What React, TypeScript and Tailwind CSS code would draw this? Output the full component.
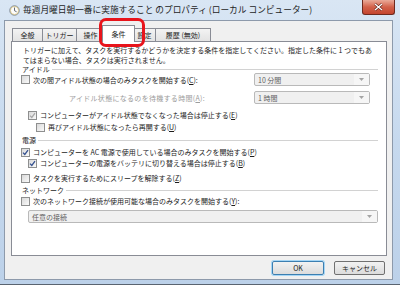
import React from "react";

const jp = "font-['Noto_Sans_CJK_JP','Noto_Sans',sans-serif]";

function Box({ checked, disabled }: { checked?: boolean; disabled?: boolean }) {
  return (
    <div className="w-[9px] h-[9px] shrink-0 border border-[#8e8f8f] bg-gradient-to-br from-[#d9d9d9] to-[#fafafa] flex items-center justify-center">
      {checked && (
        <svg width="7" height="7" viewBox="0 0 7 7">
          <path
            d="M1 3.6 L2.8 5.4 L6 1.2"
            fill="none"
            stroke={disabled ? "#a8a8a8" : "#34508f"}
            strokeWidth="1.3"
          />
        </svg>
      )}
    </div>
  );
}

function Select({ text, className }: { text: string; className: string }) {
  return (
    <div className={`h-[13px] border border-[#b9b9b9] rounded-[2px] bg-[#f0f0f0] flex items-center text-[#5f5f5f] ${className}`}>
      <span className="flex-1 pl-[3px]">{text}</span>
      <div className="w-[15px] h-full bg-[#f6f6f6] flex items-center justify-center">
        <svg width="5" height="3" viewBox="0 0 5 3">
          <path d="M0 0 L5 0 L2.5 3 Z" fill="#a4a4a4" />
        </svg>
      </div>
    </div>
  );
}

function Header({ label, className }: { label: string; className?: string }) {
  return (
    <div className={`flex items-center ml-[1px] ${className}`}>
      <span>{label}</span>
      <div className="flex-1 h-px bg-[#d2d2d2] ml-[2px]" />
    </div>
  );
}

function Row({
  indent,
  checked,
  disabled,
  children,
  className,
}: {
  indent: string;
  checked?: boolean;
  disabled?: boolean;
  children: React.ReactNode;
  className?: string;
}) {
  return (
    <div className={`flex items-center h-[10px] ${indent} ${className}`}>
      <Box checked={checked} disabled={disabled} />
      <span className="ml-[3px] whitespace-nowrap">{children}</span>
    </div>
  );
}

const tabs = [
  { label: "全般", w: "w-[31px]" },
  { label: "トリガー", w: "w-[35px]" },
  { label: "操作", w: "w-[29px]" },
  { label: "条件", w: "w-[33px]", active: true },
  { label: "設定", w: "w-[23px]" },
  { label: "履歴 (無効)", w: "w-[56px]" },
];

export default function App() {
  return (
    <div className={`relative w-[400px] h-[285px] flex flex-col bg-gradient-to-b from-[#d9e6f4] via-[#c6d9ee] to-[#bcd1e9] border-b border-[#5a6470] overflow-hidden ${jp} text-[7px] leading-[10px] text-[#1c1c1c]`}>
      {/* title bar */}
      <div className="h-[20px] shrink-0 flex items-center pl-[9px]">
        <svg width="11" height="11" viewBox="0 0 11 11">
          <circle cx="5.5" cy="5.5" r="4.7" fill="#fdfdfd" stroke="#6e7a86" strokeWidth="0.9" />
          <path d="M5.5 2.5 L5.5 5.7 L7.6 6.8" fill="none" stroke="#505a64" strokeWidth="0.9" />
          <circle cx="5.5" cy="5.5" r="4" fill="none" stroke="#d9b44a" strokeWidth="0.5" />
        </svg>
        <span className="ml-[3px] text-[8.7px] text-[#1e1e1e] whitespace-nowrap">
          毎週月曜日朝一番に実施すること のプロパティ (ローカル コンピューター)
        </span>
      </div>
      <div className="absolute right-[5px] top-0 w-[33px] h-[15px] rounded-b-[3px] border border-t-0 border-[#6e2a1f] bg-gradient-to-b from-[#e9aa99] via-[#d2614a] to-[#c4452f] flex items-center justify-center">
        <svg width="9" height="8" viewBox="0 0 9 8">
          <path d="M1 1 L8 7 M8 1 L1 7" stroke="#5a1d14" strokeWidth="2.4" />
          <path d="M1 1 L8 7 M8 1 L1 7" stroke="#ffffff" strokeWidth="1.4" />
        </svg>
      </div>

      {/* dialog body */}
      <div className="flex-1 ml-[4px] mr-[7px] mb-[4px] bg-[#f0f0f0] border border-[#8d9aab] flex flex-col pl-[6px] pr-[4px] pt-[4px]">
        <div className="flex items-end h-[16px] ml-[1px]">
          {tabs.map((t) =>
            t.active ? (
              <div
                key={t.label}
                className={`relative z-10 ${t.w} h-[17px] -mb-px -mx-[2px] bg-white border border-b-0 border-[#898c95] flex items-center justify-center`}
              >
                {t.label}
              </div>
            ) : (
              <div
                key={t.label}
                className={`${t.w} h-[13px] -mr-px bg-gradient-to-b from-[#f3f3f3] to-[#e3e3e3] border border-b-0 border-[#898c95] flex items-center justify-center whitespace-nowrap`}
              >
                {t.label}
              </div>
            )
          )}
        </div>

        <div className="h-[215px] mr-[1px] bg-white border border-[#898c95] pl-[9px] pr-[8px] flex flex-col">
          <p className="mt-[3px] ml-[2px] whitespace-nowrap">
            トリガーに加えて、タスクを実行するかどうかを決定する条件を指定してください。指定した条件に 1 つでもあ
            <br />
            てはまらない場合、タスクは実行されません。
          </p>
          <Header label="アイドル" className="h-[8px]" />
          <div className="flex items-center h-[13px]">
            <Box />
            <span className="ml-[3px] whitespace-nowrap">
              次の間アイドル状態の場合のみタスクを開始する(<span className="underline">C</span>):
            </span>
            <div className="flex-1" />
            <Select text="10 分間" className="w-[116px] mr-[8px]" />
          </div>
          <div className="flex items-center h-[13px] mt-[5px]">
            <span className="ml-[48px] whitespace-nowrap text-[#9c9c9c] tracking-[0.3px]">
              アイドル状態になるのを待機する時間(<span className="underline">A</span>):
            </span>
            <div className="flex-1" />
            <Select text="1 時間" className="w-[116px] mr-[8px]" />
          </div>
          <Row indent="ml-[7px]" checked disabled className="mt-[6px]">
            コンピューターがアイドル状態でなくなった場合は停止する(<span className="underline">E</span>)
          </Row>
          <Row indent="ml-[15px]" className="mt-[2px]">
            再びアイドル状態になったら再開する(<span className="underline">U</span>)
          </Row>
          <Header label="電源" className="h-[10px] mt-[3px]" />
          <Row indent="ml-0" checked className="mt-[2px]">
            コンピューターを AC 電源で使用している場合のみタスクを開始する(<span className="underline">P</span>)
          </Row>
          <Row indent="ml-[7px]" checked className="mt-[1px]">
            コンピューターの電源をバッテリに切り替える場合は停止する(<span className="underline">B</span>)
          </Row>
          <Row indent="ml-0" className="mt-[5px]">
            タスクを実行するためにスリープを解除する(<span className="underline">Z</span>)
          </Row>
          <Header label="ネットワーク" className="h-[10px] mt-[2px]" />
          <Row indent="ml-0" className="mt-[1px]">
            次のネットワーク接続が使用可能な場合のみタスクを開始する(<span className="underline">Y</span>):
          </Row>
          <Select text="任意の接続" className="ml-[7px] mt-[4px]" />
        </div>

        <div className="flex justify-end gap-[10px] mt-[5px] mr-[3px]">
          <div className="w-[52px] h-[14px] rounded-[2px] border border-[#3c7fb1] shadow-[0_0_0_1px_#a6d6f5] bg-gradient-to-b from-[#f2f2f2] to-[#dcdcdc] flex items-center justify-center">
            OK
          </div>
          <div className="w-[51px] h-[14px] rounded-[2px] border border-[#707070] bg-gradient-to-b from-[#f2f2f2] to-[#dcdcdc] flex items-center justify-center">
            キャンセル
          </div>
        </div>
      </div>

      {/* red annotation around the selected tab */}
      <div className="absolute left-[99px] top-[18px] w-[46px] h-[29px] border-[3px] border-[#e8141b] rounded-[7px]" />
    </div>
  );
}
